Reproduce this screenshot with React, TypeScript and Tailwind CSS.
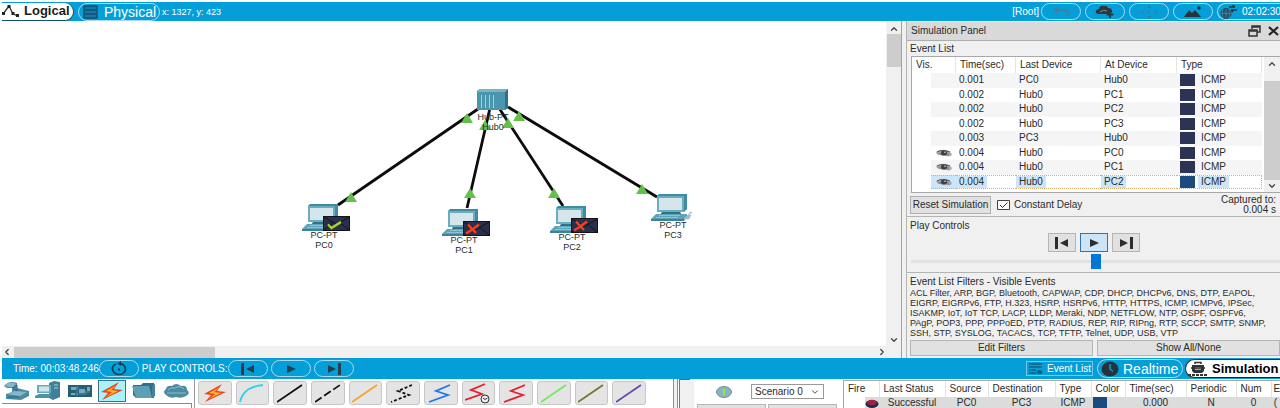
import React from "react";
import { ChevronDown, ChevronLeft, ChevronRight, ChevronUp } from "lucide-react";

type Mark = "ok" | "fail" | null;

const pcs: { name: string; x: number; y: number; mark: Mark }[] = [
  { name: "PC0", x: 301, y: 183, mark: "ok" },
  { name: "PC1", x: 441, y: 188, mark: "fail" },
  { name: "PC2", x: 549, y: 185, mark: "fail" },
  { name: "PC3", x: 650, y: 173, mark: null },
];

const links = [
  [476, 88, 336, 184],
  [488, 87, 465, 187],
  [497, 87, 561, 185],
  [506, 86, 655, 176],
];

const arrows = [
  [465, 97],
  [349, 176],
  [483, 104],
  [468, 172],
  [506, 102],
  [517, 95],
  [552, 172],
  [640, 168],
];

const events = [
  ["0.001", "PC0", "Hub0", false],
  ["0.002", "Hub0", "PC1", false],
  ["0.002", "Hub0", "PC2", false],
  ["0.002", "Hub0", "PC3", false],
  ["0.003", "PC3", "Hub0", false],
  ["0.004", "Hub0", "PC0", true],
  ["0.004", "Hub0", "PC1", true],
  ["0.004", "Hub0", "PC2", true],
] as [string, string, string, boolean][];

const filterLines = [
  "ACL Filter, ARP, BGP, Bluetooth, CAPWAP, CDP, DHCP, DHCPv6, DNS, DTP, EAPOL,",
  "EIGRP, EIGRPv6, FTP, H.323, HSRP, HSRPv6, HTTP, HTTPS, ICMP, ICMPv6, IPSec,",
  "ISAKMP, IoT, IoT TCP, LACP, LLDP, Meraki, NDP, NETFLOW, NTP, OSPF, OSPFv6,",
  "PAgP, POP3, PPP, PPPoED, PTP, RADIUS, REP, RIP, RIPng, RTP, SCCP, SMTP, SNMP,",
  "SSH, STP, SYSLOG, TACACS, TCP, TFTP, Telnet, UDP, USB, VTP",
];

function PcIcon({ mark }: { mark: Mark }) {
  return (
    <svg width="52" height="30" viewBox="0 0 52 30" className="block" aria-hidden="true">
      <path d="M7 2 9 0H37V15L34 18H7Z" fill="#3f8ba1" />
      <path d="M7 2H34V18H7Z" fill="#69adc0" />
      <rect x="9" y="4" width="23" height="12" fill="#d5e5ea" />
      <path d="M12 18H30L32 21H10Z" fill="#2f7389" />
      <path d="M6 20H37L34 25H1Z" fill="#5fa3b8" />
      <path d="M1 25H34L37 20V22L34 27H1Z" fill="#3b8299" />
      <path d="M9 21.500H30M6 23.500H28" stroke="#9dcbd8" strokeWidth="0.800" />
      {mark === null && <path d="M34 25 38 21H41L39 25ZM38 21Q41 16 42 19" fill="#8fbecb" stroke="#a9c4cc" strokeWidth="0.600" />}
      {mark && (
        <g>
          <rect x="22.500" y="12.500" width="26" height="14" fill="#2b2f49" stroke="#12131c" />
          <path d="M23 13 35.500 20.500 48 13M23 26 32 18.500M48 26 39 18.500" fill="none" stroke="#11131f" />
          {mark === "ok" ? (
            <path d="M27 20.500 30.500 24 40 18" fill="none" stroke="#a5dc2c" strokeWidth="2.200" />
          ) : (
            <path d="M25 24.500Q31 21 38 15.500M27 15.500 35 24" fill="none" stroke="#f4401d" strokeWidth="2.400" />
          )}
        </g>
      )}
    </svg>
  );
}

function Topology() {
  return (
    <div className="relative min-w-0 flex-1 overflow-hidden bg-white">
      <svg width="884" height="325" viewBox="0 0 884 325" className="absolute left-0 top-0" aria-hidden="true">
        {links.map(([a, b, c, d]) => (
          <line key={`${a}-${c}`} x1={a} y1={b} x2={c} y2={d} stroke="#0c0c0c" strokeWidth="2.800" />
        ))}
        <path d="M475 70 478 68H506V87L503 89H475Z" fill="#2f7389" />
        <path d="M475 71H503V89H475Z" fill="#4a96ad" />
        <path d="M475 71 478 68H506L503 71Z" fill="#79b5c6" />
        <path d="M479.500 74V87M483.500 74V87M487.500 74V87M491.500 74V87" stroke="#a4d0dc" strokeWidth="1" />
        {arrows.map(([x, y]) => (
          <path key={`${x}-${y}`} d={`M${x - 6} ${y + 5}L${x} ${y - 5}L${x + 6} ${y + 5}Z`} fill="#61c14b" />
        ))}
      </svg>
      <div className="absolute left-[461px] top-[91px] w-[60px] text-center text-[9px] leading-[10px]">
        Hub-PT
        <br />
        Hub0
      </div>
      {pcs.map((pc) => (
        <div key={pc.name} className="absolute" style={{ left: pc.x - 2, top: pc.y }}>
          <PcIcon mark={pc.mark} />
          <div className="-mt-1 w-[46px] text-center text-[9px] leading-[10px]">
            PC-PT
            <br />
            {pc.name}
          </div>
        </div>
      ))}
    </div>
  );
}

function Pill({ label, children }: { label: string; children: React.ReactNode }) {
  return (
    <button aria-label={label} className="flex h-[17px] w-10 items-center justify-center rounded-full border border-[#a9dcf3] text-[#24404f]">
      {children}
    </button>
  );
}

function StepBack() {
  return (
    <svg width="16" height="12" viewBox="0 0 16 12" aria-hidden="true">
      <path d="M1 0H4V12H1ZM14 2V10L6 6Z" fill="currentColor" />
    </svg>
  );
}
function Play() {
  return (
    <svg width="16" height="12" viewBox="0 0 16 12" aria-hidden="true">
      <path d="M4 2V10L13 6Z" fill="currentColor" />
    </svg>
  );
}
function StepForward() {
  return (
    <svg width="16" height="12" viewBox="0 0 16 12" aria-hidden="true">
      <path d="M12 0H15V12H12ZM2 2V10L10 6Z" fill="currentColor" />
    </svg>
  );
}

function Header() {
  return (
    <header className="flex h-[19px] items-center justify-between bg-[#049fd9] text-white">
      <div className="flex h-full items-center">
        <button className="flex h-[18px] w-[72px] items-center gap-1 rounded-r-full border-b border-r border-[#14506b] bg-white text-[13px] font-bold text-[#1b1b1b]">
          <svg width="18" height="14" viewBox="0 0 18 14" className="shrink-0" aria-hidden="true">
            <path d="M1 10 7 2 11 10 16 12" fill="none" stroke="#333" strokeWidth="1.300" />
            <path d="M0 8H3V11H0ZM5.500 1H8.500V4H5.500ZM9.500 8H12.500V11H9.500ZM14 10H17V13H14Z" fill="#222" />
          </svg>
          Logical
        </button>
        <button className="ml-1 flex h-[18px] w-[82px] items-center gap-1.5 rounded-full border border-[#a9dcf3] pl-1 text-[14px]">
          <svg width="15" height="14" viewBox="0 0 15 14" className="shrink-0" aria-hidden="true">
            <path d="M1 1H14V13H1Z" fill="#1477a5" stroke="#124f6e" strokeWidth="1.300" />
            <path d="M1 5H14M1 9H14" stroke="#124f6e" strokeWidth="1.300" />
          </svg>
          Physical
        </button>
        <span className="ml-0.5 text-[9px]">x: 1327, y: 423</span>
      </div>
      <div className="flex items-center gap-1 text-[10px]">
        <span className="-mr-0.5">[Root]</span>
        <Pill label="Back">
          <svg width="18" height="12" viewBox="0 0 18 12" aria-hidden="true">
            <path d="M1 4 6 0V3H12Q17 3 17 8V10H15V8Q15 5 12 5H6V8Z" fill="#467f98" />
          </svg>
        </Pill>
        <Pill label="New cluster">
          <svg width="20" height="14" viewBox="0 0 20 14" aria-hidden="true">
            <path d="M3 9Q0 8 1 5.500Q2 4 4 4Q5 0 9 1Q12 0 13 3Q17 3 17 6Q17 9 14 9Z" fill="#30383d" />
            <path d="M15 6V13M11.500 9.500H18.500" stroke="#30383d" strokeWidth="2.200" />
            <path d="M5 7Q8 4 12 6" stroke="#7d8a91" fill="none" />
          </svg>
        </Pill>
        <Pill label="Move object">
          <svg width="18" height="14" viewBox="0 0 18 14" aria-hidden="true">
            <path d="M9 0 11.500 3H6.500ZM9 14 6.500 11H11.500ZM0 7 3.500 5V9ZM18 7 14.500 5V9ZM8 6H10V8H8Z" fill="#3a7f9f" />
          </svg>
        </Pill>
        <Pill label="Set background">
          <svg width="18" height="13" viewBox="0 0 18 13" aria-hidden="true">
            <path d="M0 12 5 5 8 8 11 5 17 12Z" fill="#26333a" />
            <circle cx="15" cy="3" r="1.800" fill="#26333a" />
          </svg>
        </Pill>
        <button className="flex h-[17px] w-[63px] items-center gap-1 rounded-l-full border border-r-0 border-[#a9dcf3] pl-0.5 whitespace-nowrap">
          <svg width="18" height="15" viewBox="0 0 18 15" className="shrink-0" aria-hidden="true">
            <circle cx="6" cy="9.500" r="5" fill="#24546b" stroke="#293d48" />
            <path d="M1 9.500H11M6 4.500V14.500M3 5Q1 9 3 14M9 5Q11 9 9 14" stroke="#4c90ae" strokeWidth="0.700" fill="none" />
            <path d="M9 3H15M15 3 12.500 1M11 6H17M11 6 13 8" stroke="#26333a" strokeWidth="1.500" />
          </svg>
          02:02:30
        </button>
      </div>
    </header>
  );
}

function Eye() {
  return (
    <svg width="16" height="8" viewBox="0 0 16 8" className="ml-auto mr-1 block" aria-hidden="true">
      <path d="M0 3Q6-1 13 2L16 5L15 7Q8 8 1 5Z" fill="#a9adb0" />
      <path d="M1 3Q6 0 14 3" stroke="#555" fill="none" />
      <ellipse cx="8" cy="4" rx="3.200" ry="2.500" fill="#3d4347" />
      <circle cx="9" cy="3.300" r="0.800" fill="#ddd" />
      <path d="M12 4V7M2 5H5" stroke="#666" strokeWidth="0.800" />
    </svg>
  );
}

function EventTable() {
  return (
    <div className="ml-1 flex h-[137px] border border-r-0 border-[#a8a8a8] bg-white">
      <div className="min-w-0 flex-1 pr-0.5">
        <table className="h-[132px] w-full table-fixed border-separate border-spacing-0 text-left">
          <colgroup>
            <col className="w-[19px]" />
            <col className="w-[25px]" />
            <col className="w-[60px]" />
            <col className="w-[85px]" />
            <col className="w-[76px]" />
            <col />
          </colgroup>
          <thead>
            <tr className="h-4 [&>th]:border-r [&>th]:border-[#e4e4e4] [&>th]:p-0 [&>th]:pl-1 [&>th]:font-normal">
              <th colSpan={2}>Vis.</th>
              <th>Time(sec)</th>
              <th>Last Device</th>
              <th>At Device</th>
              <th>Type</th>
            </tr>
          </thead>
          <tbody>
            {events.map(([time, last, at, seen], i) => {
              const sel = i === events.length - 1;
              const hl = sel ? "inline-block bg-[#cbe6fa] px-[3px]" : "inline-block px-[3px]";
              const cell = sel ? "border-y border-dotted border-[#e2ab6a]" : i % 2 === 0 ? "bg-[#f5f5f5]" : "";
              return (
                <tr key={i} className="h-[14px] [&>td]:p-0">
                  <td />
                  <td className={sel ? "border-y border-dotted border-[#e2ab6a] bg-[#cbe6fa]" : cell}>{seen && <Eye />}</td>
                  <td className={cell}>
                    <span className={hl}>{time}</span>
                  </td>
                  <td className={cell}>
                    <span className={hl}>{last}</span>
                  </td>
                  <td className={cell}>
                    <span className={hl}>{at}</span>
                  </td>
                  <td className={sel ? "border-y border-r border-dotted border-[#e2ab6a]" : cell}>
                    <div className="flex items-center gap-[3px] pl-[3px]">
                      <span className={sel ? "h-3 w-[15px] bg-[#1d4a7e]" : "h-3 w-[15px] bg-[#2c3354]"} />
                      <span className={hl}>ICMP</span>
                    </div>
                  </td>
                </tr>
              );
            })}
          </tbody>
        </table>
      </div>
      <div className="flex w-4 flex-col items-center bg-[#f0f0f0] text-[#444]">
        <ChevronUp size={10} strokeWidth={3} className="mb-2 mt-0.5" />
        <div className="mt-1 w-full flex-1 bg-[#cdcdcd]" />
        <ChevronDown size={10} strokeWidth={3} className="my-px" />
      </div>
    </div>
  );
}

const ctl = "flex h-[19px] w-7 items-center justify-center border border-[#b5b5b5] bg-[#e1e1e1] text-[#2c2c2c]";

function SimulationPanel() {
  return (
    <aside className="flex w-[379px] shrink-0 flex-col border-l border-[#a0a0a0] bg-[#f0f0f0] pl-1">
      <div className="flex flex-1 flex-col border-l border-[#b4b4b4]">
        <div className="mt-px flex h-[19px] items-center justify-between border-b border-[#adadad] bg-[#d9d9d9] pl-1">
          <h2>Simulation Panel</h2>
          <div className="flex gap-1.5">
            <button aria-label="Float panel">
              <svg width="13" height="12" viewBox="0 0 13 12" aria-hidden="true">
                <path d="M4 4V1H12V7H9M1 5H9V11H1ZM1 6H9M4 2H12" fill="none" stroke="#333" strokeWidth="1.500" />
              </svg>
            </button>
            <button aria-label="Close panel">
              <svg width="13" height="12" viewBox="0 0 13 12" aria-hidden="true">
                <path d="M2 2 11 10M11 2 2 10" stroke="#222" strokeWidth="2.200" />
              </svg>
            </button>
          </div>
        </div>
        <h3 className="h-[15px] pl-[3px] leading-4">Event List</h3>
        <EventTable />
        <div className="flex h-6 items-center border-b border-[#b4b4b4] pl-[3px]">
          <button className="h-[18px] w-[81px] border border-[#b0b0b0] bg-[#e1e1e1] whitespace-nowrap">Reset Simulation</button>
          <label className="ml-1.5 flex items-center gap-1">
            <input type="checkbox" defaultChecked className="peer sr-only" />
            <svg width="13" height="10" viewBox="0 0 13 10" aria-hidden="true">
              <path d="M0.500 0.500H12.500V9.500H0.500Z" fill="#fff" stroke="#444" />
              <path d="M3 5 5.500 7.500 10.500 2.500" fill="none" stroke="#333" />
            </svg>
            Constant Delay
          </label>
          <p className="ml-auto pr-1 text-right leading-[10px]">
            Captured to:
            <br />
            0.004 s
          </p>
        </div>
        <section className="h-14 border-b border-[#b4b4b4]">
          <h3 className="h-4 pl-[3px] pt-[3px] leading-3">Play Controls</h3>
          <div className="flex justify-center gap-1">
            <button aria-label="Step back" className={ctl}>
              <StepBack />
            </button>
            <button aria-label="Play" className="flex h-[19px] w-7 items-center justify-center border border-[#2f76ad] bg-[#cce4f7] text-[#2c2c2c]">
              <Play />
            </button>
            <button aria-label="Step forward" className={ctl}>
              <StepForward />
            </button>
          </div>
          <input
            type="range"
            aria-label="Play speed"
            defaultValue={50}
            className="ml-1 mt-0.5 block h-[15px] w-[calc(100%-4px)] appearance-none bg-transparent [&::-webkit-slider-runnable-track]:h-[3px] [&::-webkit-slider-runnable-track]:bg-[#e2e2e2] [&::-webkit-slider-thumb]:-mt-1.5 [&::-webkit-slider-thumb]:h-[15px] [&::-webkit-slider-thumb]:w-2.5 [&::-webkit-slider-thumb]:appearance-none [&::-webkit-slider-thumb]:bg-[#0078d7]"
          />
        </section>
        <section className="flex flex-1 flex-col pb-0.5 pl-[3px] pt-[3px]">
          <h3 className="h-3 leading-3">Event List Filters - Visible Events</h3>
          <p className="text-[9px] leading-[10px] whitespace-nowrap">
            {filterLines.map((l) => (
              <React.Fragment key={l}>
                {l}
                <br />
              </React.Fragment>
            ))}
          </p>
          <div className="mt-0.5 flex gap-1">
            <button className="h-4 flex-1 border border-[#b5b5b5] bg-[#e1e1e1]">Edit Filters</button>
            <button className="h-4 flex-1 border border-[#b5b5b5] bg-[#e1e1e1]">Show All/None</button>
          </div>
        </section>
      </div>
    </aside>
  );
}

function Bolt() {
  return (
    <>
      <path d="M20 1 2 11 9 12 3 19 24 9 15 8Z" fill="#ee4423" />
      <path d="M18 4 7 10 13 11 7 16 19 10 12 9Z" fill="#ffb526" />
    </>
  );
}

const cables: { name: string; art: React.ReactNode }[] = [
  { name: "Automatic", art: <Bolt /> },
  { name: "Console", art: <path d="M1 19Q4 4 24 2" stroke="#35d3e6" /> },
  { name: "Straight-through", art: <path d="M0 19 25 2" stroke="#111" /> },
  { name: "Cross-over", art: <path d="M0 19 25 2" stroke="#111" strokeDasharray="8 3" /> },
  { name: "Fiber", art: <path d="M0 19 25 2" stroke="#f5a32c" /> },
  { name: "Phone", art: <path d="M22 2 8 8 19 12 1 19" stroke="#111" strokeDasharray="3 2" /> },
  { name: "Coaxial", art: <path d="M22 2 8 8 20 12 1 19" stroke="#2076ef" /> },
  {
    name: "Serial DCE",
    art: (
      <>
        <path d="M20 1 6 7 17 11 0 17" stroke="#e3202b" />
        <circle cx="20" cy="16" r="4" fill="#eee" stroke="#333" strokeWidth="1" />
        <path d="M18 15 20 16.500 22.500 15" stroke="#333" strokeWidth="1" />
      </>
    ),
  },
  { name: "Serial DTE", art: <path d="M22 2 8 8 20 12 1 19" stroke="#e3202b" /> },
  { name: "Octal", art: <path d="M0 19 25 2" stroke="#74e95c" /> },
  { name: "IoT custom", art: <path d="M0 19 25 2" stroke="#77742c" /> },
  { name: "USB", art: <path d="M0 19 25 2" stroke="#6c48a6" /> },
];

const deviceIcons: { name: string; art: React.ReactNode }[] = [
  {
    name: "Network devices",
    art: (
      <>
        <path d="M1 5Q6-1 14 2V7L26 10V15L18 19L3 18V13L9 11V7H4Z" fill="#4a8da3" />
        <path d="M2 4Q7 0 13 3L10 6H5ZM4 13 12 10 24 11 17 15Z" fill="#86b9c8" />
        <path d="M10 7 14 4V10ZM5 16H16" stroke="#2d6478" fill="none" />
      </>
    ),
  },
  {
    name: "End devices",
    art: (
      <>
        <path d="M14 2 19 0 25 1V16L18 19 14 17Z" fill="#3e8197" />
        <path d="M2 4H16V12H2Z" fill="#6ba9bc" />
        <path d="M4 5.500H14V10.500H4Z" fill="#cfe3e9" />
        <path d="M0 15 4 13H17L14 17H0Z" fill="#4d93a8" />
        <path d="M19 4H23M19 7H23" stroke="#a7cfda" />
      </>
    ),
  },
  {
    name: "Components",
    art: (
      <>
        <path d="M1 4H25V16H1Z" fill="#275e75" />
        <path d="M4 6H9V9H4ZM12 8H18V12H12ZM20 6H23V10H20ZM4 12H8V14H4Z" fill="#77aabb" />
        <path d="M9 7H12M18 11H23M8 13H20M10 5V15" stroke="#4f8ea4" />
      </>
    ),
  },
  { name: "Connections", art: <Bolt /> },
  {
    name: "Miscellaneous",
    art: (
      <>
        <path d="M2 4H10L12 2H23V17H5L2 14Z" fill="#2f7088" />
        <path d="M1 5H18L21 17H5Z" fill="#5da0b5" />
        <path d="M21 5 24 3V15L21 17Z" fill="#41849b" />
      </>
    ),
  },
  {
    name: "Multiuser connection",
    art: (
      <>
        <path d="M3 14Q-1 11 3 8Q4 4 9 5Q13 1 18 5Q24 4 24 9Q28 12 23 15Q18 18 13 16Q7 18 3 14Z" fill="#4b8ca2" />
        <path d="M5 9Q8 6 12 7Q17 4 21 8M4 12H23" stroke="#8ebccb" fill="none" />
      </>
    ),
  },
];

const pduHead = "border-r border-[#e2e2e2] p-0 pl-1 text-left font-normal";

export default function App() {
  return (
    <div
      className="overflow-hidden bg-white pl-0.5 pt-0.5 text-[10px] leading-3 text-[#2a2a2a]"
      style={{ fontFamily: '"Liberation Sans", Arial, sans-serif' }}
    >
      <Header />
      <main className="flex">
        <div className="flex min-w-0 flex-1 flex-col">
          <div className="flex flex-1">
            <Topology />
            <div className="flex w-[15px] shrink-0 flex-col items-center bg-[#f0f0f0] text-[#444]">
              <ChevronUp size={10} strokeWidth={3} className="mt-[3px]" />
              <div className="h-[33px] w-[14px] bg-[#cdcdcd]" />
              <ChevronDown size={10} strokeWidth={3} className="mb-px mt-auto" />
            </div>
          </div>
          <div className="flex h-3 items-center bg-[#f0f0f0] pr-[14px] text-[#444]">
            <ChevronLeft size={10} strokeWidth={3} />
            <div className="ml-0.5 h-[11px] w-[201px] bg-[#cdcdcd]" />
            <ChevronRight size={10} strokeWidth={3} className="ml-auto" />
          </div>
        </div>
        <SimulationPanel />
      </main>
      <div className="flex h-[21px] items-center bg-[#049fd9] pl-[11px] text-white">
        <span>Time: 00:03:48.246</span>
        <Pill label="Power cycle devices">
          <svg width="18" height="15" viewBox="0 0 18 15" aria-hidden="true">
            <path d="M6 3Q2 4.500 2.500 8.500Q4 13.500 9 13.500Q15 13 15.500 8.500Q15.500 3.500 10 2.500" fill="none" stroke="#164055" strokeWidth="1.700" />
            <path d="M11 0V5L7 2.500ZM8 7.500H10V9.500H8Z" fill="#164055" />
          </svg>
        </Pill>
        <span className="ml-[3px]">PLAY CONTROLS:</span>
        <div className="flex gap-[3px]">
          <Pill label="Step back">
            <StepBack />
          </Pill>
          <Pill label="Play">
            <Play />
          </Pill>
          <Pill label="Step forward">
            <StepForward />
          </Pill>
        </div>
        <button className="ml-auto flex h-[15px] w-[67px] items-center gap-1 border border-[#74c8ea] pl-0.5 whitespace-nowrap">
          <svg width="14" height="12" viewBox="0 0 14 12" className="shrink-0" aria-hidden="true">
            <path d="M0 1H13M0 4H13M0 7H7M0 10H7" stroke="#1a607f" strokeWidth="1.600" />
            <ellipse cx="10.500" cy="9" rx="3" ry="2" fill="#1a607f" />
          </svg>
          Event List
        </button>
        <button className="ml-1 flex h-[19px] w-[86px] items-center gap-1 rounded-full border border-[#a9dcf3] pl-[3px] text-[14px]">
          <svg width="18" height="16" viewBox="0 0 18 16" className="shrink-0" aria-hidden="true">
            <ellipse cx="9" cy="8" rx="8.500" ry="7.500" fill="#26333b" />
            <path d="M9 3V8L12 10.500" fill="none" stroke="#069fd9" strokeWidth="1.500" />
          </svg>
          Realtime
        </button>
        <button className="ml-0.5 flex h-[19px] w-[95px] items-center gap-1 rounded-l-full border border-r-0 border-[#222] bg-white pl-0.5 text-[13px] font-bold text-black">
          <svg width="20" height="16" viewBox="0 0 20 16" className="shrink-0" aria-hidden="true">
            <path d="M4 4H16V10L14 12H6L4 10Z" fill="#333" />
            <path d="M7 6H13V9H7Z" fill="#aaa" />
            <path d="M7 3V1.500H13V3M3 7H17" fill="none" stroke="#333" strokeWidth="1.500" />
            <path d="M0 14H20" stroke="#333" strokeWidth="2" strokeDasharray="3 1" />
          </svg>
          Simulation
        </button>
      </div>
      <footer className="flex h-[29px] overflow-hidden">
        <div className="w-[193px] shrink-0 border-r border-[#9a9a9a] pr-0.5">
          <div className="flex h-6 items-center gap-1">
            {deviceIcons.map((d) => (
              <button
                key={d.name}
                aria-label={d.name}
                className={
                  d.name === "Connections"
                    ? "flex h-[22px] w-7 items-center justify-center border border-[#3f6f83] bg-[#a8f3fa]"
                    : "flex h-[22px] w-7 items-center justify-center"
                }
              >
                <svg width="26" height="20" viewBox="0 0 26 20" aria-hidden="true">
                  {d.art}
                </svg>
              </button>
            ))}
          </div>
          <div className="h-2 border-r border-t border-[#8a8a8a]" />
        </div>
        <div className="ml-[3px] mt-[2px] grid h-6 w-[448px] shrink-0 grid-cols-12 gap-1">
          {cables.map((c) => (
            <button key={c.name} aria-label={c.name} className="flex items-center justify-center rounded-[3px] border border-[#c6c6c6] bg-[#e4e4e4]">
              <svg width="26" height="21" viewBox="0 0 26 21" fill="none" strokeWidth="1.800" aria-hidden="true">
                {c.art}
              </svg>
            </button>
          ))}
        </div>
        <div className="min-w-6 flex-1" />
        <div className="mr-px w-[5px] shrink-0 border-x border-[#8f8f8f] bg-[#f0f0f0]" />
        <div className="w-[15px] shrink-0 border-l border-[#777] bg-[#f0f0f0]">
          <div className="h-px w-2.5 bg-[#666]" />
        </div>
        <div className="flex w-[149px] shrink-0 flex-col">
          <div className="flex h-[25px] shrink-0 items-center pl-[22px]">
            <svg width="16" height="12" viewBox="0 0 16 12" aria-hidden="true">
              <ellipse cx="8" cy="6" rx="7.500" ry="5.500" fill="#86b4bf" stroke="#7595a1" />
              <path d="M8 3V9.500M6.500 4H8" stroke="#9fe04d" strokeWidth="2" />
            </svg>
            <div className="relative ml-[19px] flex items-center">
              <select aria-label="Scenario" className="h-[15px] w-[73px] appearance-none border border-[#9a9a9a] bg-white pl-[3px] leading-3">
                <option>Scenario 0</option>
              </select>
              <ChevronDown size={10} className="pointer-events-none absolute right-1 text-[#333]" />
            </div>
          </div>
          <div className="flex gap-0.5 pl-[3px]">
            <button aria-label="New scenario" className="h-4 w-[69px] border border-[#b5b5b5] bg-[#e1e1e1]" />
            <button aria-label="Delete scenario" className="h-4 w-[69px] border border-[#b5b5b5] bg-[#e1e1e1]" />
          </div>
        </div>
        <div className="mt-px w-[437px] shrink-0 border-l border-t border-[#a8a8a8]">
          <table className="w-full table-fixed border-collapse whitespace-nowrap">
            <colgroup>
              <col className="w-[21px]" />
              <col className="w-[14px]" />
              <col className="w-[66px]" />
              <col className="w-[43px]" />
              <col className="w-[67px]" />
              <col className="w-[36px]" />
              <col className="w-[34px]" />
              <col className="w-[61px]" />
              <col className="w-[50px]" />
              <col className="w-[35px]" />
              <col />
            </colgroup>
            <thead>
              <tr className="h-4">
                <th colSpan={2} className={pduHead}>Fire</th>
                <th className={pduHead}>Last Status</th>
                <th className={pduHead}>Source</th>
                <th className={pduHead}>Destination</th>
                <th className={pduHead}>Type</th>
                <th className={pduHead}>Color</th>
                <th className={pduHead}>Time(sec)</th>
                <th className={pduHead}>Periodic</th>
                <th className={pduHead}>Num</th>
                <th className="overflow-hidden p-0 pl-0.5 text-left font-normal">E</th>
              </tr>
            </thead>
            <tbody>
              <tr className="h-3 text-center [&>td]:p-0 [&>td:not(:first-child)]:bg-[#dcdcdc]">
                <td />
                <td>
                  <svg width="14" height="10" viewBox="0 0 14 10" className="block" aria-hidden="true">
                    <ellipse cx="7" cy="6" rx="6.500" ry="4" fill="#202a4d" />
                    <ellipse cx="7" cy="4.500" rx="4.500" ry="2.800" fill="#a51f3e" />
                  </svg>
                </td>
                <td>Successful</td>
                <td>PC0</td>
                <td>PC3</td>
                <td>ICMP</td>
                <td>
                  <div className="ml-0.5 h-3 w-[14px] bg-[#1d4a7e]" />
                </td>
                <td>0.000</td>
                <td>N</td>
                <td>0</td>
                <td className="overflow-hidden">(</td>
              </tr>
            </tbody>
          </table>
        </div>
      </footer>
    </div>
  );
}
